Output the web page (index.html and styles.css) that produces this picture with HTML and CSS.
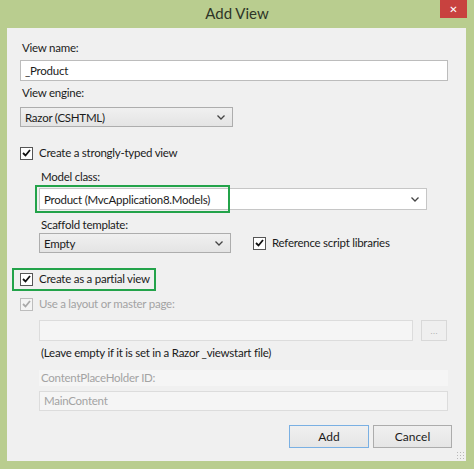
FILE: index.html
```html
<!DOCTYPE html>
<html>
<head>
    <link rel="stylesheet" href="styles.css">
    <title>Add View</title>
</head>
<body>
    <div class="window">
        <div class="titlebar">
            <span class="title">Add View</span>
            <button class="closeBtn">&#x2715;</button>
        </div>
        <div class="panel">
            <div class="label first">View name:</div>
            <input type="text" class="textbox name" value="_Product">

            <div class="label gapSmall">View engine:</div>
            <div class="combo engine">
                <span>Razor (CSHTML)</span>
                <svg class="arrow" width="8" height="5" viewBox="0 0 8 5"><path d="M0.5 0.5 L4 4 L7.5 0.5" fill="none" stroke="#444" stroke-width="1.3"/></svg>
            </div>

            <label class="check strongly">
                <span class="box"><svg width="9" height="8" viewBox="0 0 9 8"><path d="M1 4 L3.5 6.5 L8 1" fill="none" stroke="#111" stroke-width="1.8"/></svg></span>
                Create a strongly-typed view
            </label>

            <div class="indent">
                <div class="label model">Model class:</div>
                <div class="modelWrap">
                    <div class="combo modelCombo">
                        <span>Product (MvcApplication8.Models)</span>
                        <svg class="arrow" width="8" height="5" viewBox="0 0 8 5"><path d="M0.5 0.5 L4 4 L7.5 0.5" fill="none" stroke="#444" stroke-width="1.3"/></svg>
                    </div>
                    <div class="mark markModel"></div>
                </div>

                <div class="label scaffold">Scaffold template:</div>
                <div class="scaffoldRow">
                    <div class="combo template">
                        <span>Empty</span>
                        <svg class="arrow" width="8" height="5" viewBox="0 0 8 5"><path d="M0.5 0.5 L4 4 L7.5 0.5" fill="none" stroke="#444" stroke-width="1.3"/></svg>
                    </div>
                    <label class="check refLibs">
                        <span class="box"><svg width="9" height="8" viewBox="0 0 9 8"><path d="M1 4 L3.5 6.5 L8 1" fill="none" stroke="#111" stroke-width="1.8"/></svg></span>
                        Reference script libraries
                    </label>
                </div>
            </div>

            <div class="partialWrap">
                <label class="check partial">
                    <span class="box"><svg width="9" height="8" viewBox="0 0 9 8"><path d="M1 4 L3.5 6.5 L8 1" fill="none" stroke="#111" stroke-width="1.8"/></svg></span>
                    Create as a partial view
                </label>
                <div class="mark markPartial"></div>
            </div>

            <label class="check disabled layout">
                <span class="box"><svg width="9" height="8" viewBox="0 0 9 8"><path d="M1 4 L3.5 6.5 L8 1" fill="none" stroke="#aaa" stroke-width="1.8"/></svg></span>
                Use a layout or master page:
            </label>

            <div class="indent">
                <div class="layoutRow">
                    <div class="textbox off layoutPath"></div>
                    <button class="browse">...</button>
                </div>
                <div class="label note">(Leave empty if it is set in a Razor _viewstart file)</div>
                <div class="label off holder">ContentPlaceHolder ID:</div>
                <div class="textbox off mainContent">MainContent</div>
            </div>

            <div class="buttons">
                <button class="btn add">Add</button>
                <button class="btn">Cancel</button>
            </div>
            <div class="grip"></div>
        </div>
    </div>
</body>
</html>
```

FILE: styles.css
```css
*{
    margin: 0px;
    padding: 0px;
    box-sizing: border-box;
}
body{
    background-color: #b9cd8f;
    font-family: Lato, "Open Sans", sans-serif;
    font-size: 11.5px;
    letter-spacing: -0.25px;
    color: #1b1b1b;
}
.window{
    width: 474px;
    height: 469px;
}
.titlebar{
    position: relative;
    height: 28px;
    text-align: center;
}
.title{
    display: inline-block;
    line-height: 27px;
    font-size: 15px;
    letter-spacing: 0px;
    color: #2e3527;
}
.closeBtn{
    position: absolute;
    right: 7px;
    top: 0px;
    width: 27px;
    height: 18px;
    border: none;
    background-color: #c8423f;
    color: #fff;
    font-size: 10px;
    font-weight: bold;
    font-family: "DejaVu Sans", sans-serif;
}
.panel{
    position: relative;
    margin: 0px 8px 0px 7px;
    height: 433px;
    background-color: #f0f0f0;
    padding: 12px 18px 0px 13px;
}
.label{
    height: 16px;
    line-height: 16px;
    padding-left: 2px;
}
.gapSmall{ margin-top: 4px; }
.textbox{
    display: block;
    width: 100%;
    height: 21px;
    border: 1px solid #bcbcbc;
    background-color: #fff;
    font: inherit;
    letter-spacing: inherit;
    color: inherit;
    padding: 0px 4px;
    line-height: 19px;
    outline: none;
}
.name{ margin-top: 4px; }

/* drop-down boxes */
.combo{
    display: flex;
    align-items: center;
    justify-content: space-between;
    height: 20px;
    border: 1px solid #adadad;
    padding: 0px 7px 0px 4px;
    background: linear-gradient(#f0f0f0, #e4e4e4);
}
.engine{
    width: 213px;
    margin-top: 6px;
}
.modelCombo{
    width: 388px;
    height: 22px;
    background: #fff;
    border-color: #c6c6c6;
}
.template{
    width: 192px;
}

/* check boxes */
.check{
    display: flex;
    align-items: center;
    height: 16px;
    line-height: 16px;
}
.box{
    display: flex;
    align-items: center;
    justify-content: center;
    width: 13px;
    height: 13px;
    margin-right: 6px;
    border: 1px solid #555;
    background-color: #fff;
}
.disabled{ color: #a3a3a3; }
.disabled .box{ border-color: #bdbdbd; background-color: #f4f4f4; }
.strongly{ margin-top: 18px; }

.indent{
    padding-left: 19px;
}
.model{ margin-top: 8px; }
.modelWrap{
    position: relative;
    margin-top: 3px;
}
.mark{
    position: absolute;
    border: 2px solid #23a34a;
}
.markModel{
    left: -4px;
    top: -3px;
    width: 195px;
    height: 28px;
}
.scaffold{ margin-top: 7px; }
.scaffoldRow{
    display: flex;
    align-items: center;
    gap: 22px;
}
.partialWrap{
    position: relative;
    margin-top: 18px;
}
.markPartial{
    left: -8px;
    top: -3px;
    width: 144px;
    height: 23px;
}
.layout{ margin-top: 9px; }
.layoutRow{
    display: flex;
    gap: 8px;
    margin-top: 8px;
}
.off{
    background-color: #f5f5f5;
    border-color: #dcdcdc;
    color: #a3a3a3;
}
.layoutPath{
    width: 374px;
}
.browse{
    width: 26px;
    height: 21px;
    border: 1px solid #d8d8d8;
    background-color: #efefef;
    color: #b0b0b0;
    font-size: 9px;
}
.note{ margin-top: 4px; }
.holder{ margin-top: 9px; }
.mainContent{
    height: 20px;
    margin-top: 5px;
    line-height: 18px;
}
.buttons{
    display: flex;
    justify-content: flex-end;
    gap: 4px;
    margin-top: 14px;
    margin-right: -4px;
}
.btn{
    width: 79px;
    height: 23px;
    border: 1px solid #acacac;
    background: linear-gradient(#f0f0f0, #e5e5e5);
    font: inherit;
    font-size: 12px;
    letter-spacing: 0px;
    color: #1b1b1b;
}
.add{
    width: 80px;
    border-color: #7ab0e3;
}
.grip{
    position: absolute;
    right: 2px;
    bottom: 2px;
    width: 8px;
    height: 8px;
    background-image: radial-gradient(#b8b8b8 0.8px, transparent 1px);
    background-size: 3px 3px;
}
```
